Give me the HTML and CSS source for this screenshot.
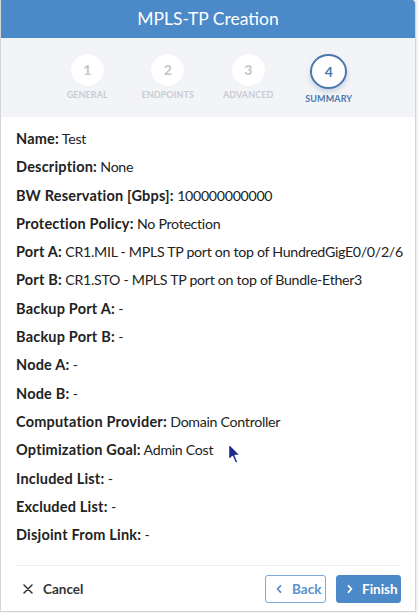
FILE: index.html
```html
<!DOCTYPE html>
<html>
<head>
<meta charset="utf-8">
<link rel="stylesheet" href="styles.css">
</head>
<body>
<div class="modal">
  <div class="header">MPLS-TP Creation</div>
  <div class="stepper">
    <div class="step"><div class="circle">1</div><div class="label">General</div></div>
    <div class="step"><div class="circle">2</div><div class="label">Endpoints</div></div>
    <div class="step"><div class="circle">3</div><div class="label">Advanced</div></div>
    <div class="step active"><div class="circle">4</div><div class="label">Summary</div></div>
  </div>
  <div class="content">
    <div class="row"><b>Name:</b> Test</div>
    <div class="row"><b>Description:</b> None</div>
    <div class="row"><b>BW Reservation [Gbps]:</b> 100000000000</div>
    <div class="row"><b>Protection Policy:</b> No Protection</div>
    <div class="row"><b>Port A:</b> CR1.MIL - MPLS TP port on top of HundredGigE0/0/2/6</div>
    <div class="row"><b>Port B:</b> CR1.STO - MPLS TP port on top of Bundle-Ether3</div>
    <div class="row"><b>Backup Port A:</b> -</div>
    <div class="row"><b>Backup Port B:</b> -</div>
    <div class="row"><b>Node A:</b> -</div>
    <div class="row"><b>Node B:</b> -</div>
    <div class="row"><b>Computation Provider:</b> Domain Controller</div>
    <div class="row"><b>Optimization Goal:</b> Admin Cost</div>
    <div class="row"><b>Included List:</b> -</div>
    <div class="row"><b>Excluded List:</b> -</div>
    <div class="row"><b>Disjoint From Link:</b> -</div>
    <svg class="cursor" width="16" height="24" viewBox="0 0 16 24"><path d="M1.5 1.5 L1.5 18 L5.5 14.5 L8.5 21.5 L11 20.3 L8.2 13.5 L13.5 13.5 Z" fill="#1d2a8c" stroke="#ffffff" stroke-width="1.4" stroke-linejoin="round"/></svg>
  </div>
  <div class="footer">
    <button class="cancel"><svg width="10" height="10" viewBox="0 0 10 10"><path d="M1 1 L9 9 M9 1 L1 9" stroke="#333" stroke-width="1.5" stroke-linecap="round"/></svg>Cancel</button>
    <div class="actions">
      <button class="btn back"><svg width="6" height="10" viewBox="0 0 6 10"><path d="M4.5 1.8 L1.5 5 L4.5 8.2" fill="none" stroke="#5a8fcb" stroke-width="1.8" stroke-linecap="round" stroke-linejoin="round"/></svg>Back</button>
      <button class="btn finish"><svg width="6" height="10" viewBox="0 0 6 10"><path d="M1.5 1.8 L4.5 5 L1.5 8.2" fill="none" stroke="#ffffff" stroke-width="1.8" stroke-linecap="round" stroke-linejoin="round"/></svg>Finish</button>
    </div>
  </div>
</div>
</body>
</html>
```
FILE: styles.css
```css
html, body {
  margin: 0;
  padding: 0;
  background: #f2f2f2;
}
body {
  font-family: Lato, "Noto Sans", sans-serif;
  color: #262626;
}
.modal {
  width: 414px;
  height: 611px;
  background: #ffffff;
  border: 1px solid #d6d6d6;
  border-top: none;
  border-radius: 0 4px 0 0;
  display: flex;
  flex-direction: column;
  overflow: hidden;
  position: relative;
}
.header {
  height: 38px;
  background: #4b89c9;
  color: #ffffff;
  font-size: 17.5px;
  line-height: 38px;
  text-align: center;
}
.stepper {
  height: 79px;
  background: #f3f4f7;
  display: flex;
  justify-content: center;
  box-sizing: border-box;
  padding-top: 16px;
}
.step {
  width: 80.5px;
  display: flex;
  flex-direction: column;
  align-items: center;
}
.circle {
  width: 33px;
  height: 32px;
  border-radius: 50%;
  background: #ffffff;
  color: #c3c6cd;
  font-size: 14px;
  font-weight: 700;
  line-height: 32px;
  text-align: center;
  box-shadow: 0 0 3px rgba(0,0,0,0.03);
}
.label {
  margin-top: 3px;
  font-size: 9px;
  font-weight: 700;
  text-transform: uppercase;
  color: #c9ccd3;
  letter-spacing: 0.1px;
}
.step.active .circle {
  width: 33px;
  height: 31px;
  border: 2px solid #4a78ad;
  color: #4a78ad;
  line-height: 31px;
  box-shadow: 0 3px 5px rgba(74,120,173,0.25);
}
.step.active .label {
  color: #4a78ad;
  margin-top: 4px;
}
.content {
  flex: 1;
  padding: 8px 0 0 15px;
  position: relative;
}
.row {
  font-size: 14.2px;
  letter-spacing: -0.3px;
  line-height: 28.3px;
  height: 28.3px;
  white-space: nowrap;
  color: #222222;
}
.row b {
  font-weight: 700;
  font-size: 14.5px;
  letter-spacing: 0.2px;
}
.cursor {
  position: absolute;
  left: 226px;
  top: 325px;
}
.footer {
  margin: 0 14px;
  border-top: 1px solid #ececec;
  height: 45px;
  display: flex;
  align-items: center;
  justify-content: space-between;
}
.cancel {
  border: none;
  background: none;
  font-family: inherit;
  font-size: 13.5px;
  font-weight: 700;
  color: #333333;
  display: flex;
  align-items: center;
  gap: 10px;
  padding: 0 0 0 8px;
}
.actions {
  display: flex;
  gap: 10px;
}
.btn {
  height: 28px;
  border-radius: 3px;
  font-family: inherit;
  font-size: 13.5px;
  font-weight: 700;
  display: flex;
  align-items: center;
  justify-content: flex-start;
  box-sizing: border-box;
  padding: 0 0 0 10px;
  white-space: nowrap;
}
.back {
  width: 61px;
  gap: 10px;
  background: #ffffff;
  border: 1px solid #7fa6d4;
  color: #5a8fcb;
}
.finish {
  width: 65px;
  gap: 9px;
  background: #4b89c9;
  border: 1px solid #4b89c9;
  color: #ffffff;
}
```
